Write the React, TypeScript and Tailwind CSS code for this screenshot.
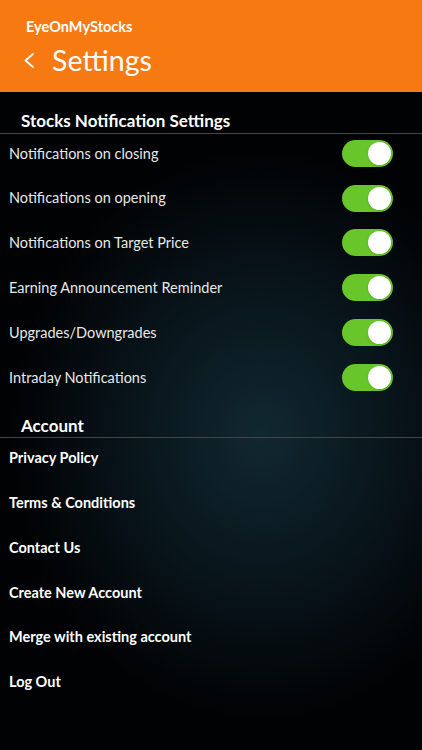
const notificationRows = [
  'Notifications on closing',
  'Notifications on opening',
  'Notifications on Target Price',
  'Earning Announcement Reminder',
  'Upgrades/Downgrades',
  'Intraday Notifications',
];

const accountRows = [
  'Privacy Policy',
  'Terms & Conditions',
  'Contact Us',
  'Create New Account',
  'Merge with existing account',
  'Log Out',
];

const Toggle = () => (
  <div className="w-[51px] h-[27px] rounded-full bg-[#68c52a] flex items-center justify-end pr-[2px]">
    <div className="w-[23px] h-[23px] rounded-full bg-white shadow" />
  </div>
);

const App = () => {
  return (
    <div
      className="w-[422px] h-[750px] overflow-hidden text-white bg-[radial-gradient(ellipse_70%_45%_at_62%_58%,#112831_0%,#071218_50%,#010203_85%)]"
      style={{ fontFamily: 'Lato, "Open Sans", sans-serif' }}
    >
      <header className="h-[92px] bg-[#f77912] pt-[17px] pl-[26px]">
        <div className="text-[14.5px] font-bold leading-[20px]">EyeOnMyStocks</div>
        <div className="flex items-center mt-[5px] -ml-[2px]">
          <svg width="10" height="15" viewBox="0 0 10 15" fill="none">
            <polyline
              points="9,1 1.5,7.5 9,14"
              stroke="white"
              strokeWidth="1.7"
              strokeLinecap="round"
              strokeLinejoin="round"
            />
          </svg>
          <span className="ml-[18px] text-[28.5px] leading-[36px]">Settings</span>
        </div>
      </header>

      <section className="pt-[18px]">
        <div className="pl-[21px] text-[17px] font-bold leading-[22px]">
          Stocks Notification Settings
        </div>
        <div className="mt-[1px] h-px bg-[#454545]" />
        <div className="flex flex-col -mt-[3px]">
          {notificationRows.map((label) => (
            <div key={label} className="h-[44.8px] flex items-center justify-between pl-[9px] pr-[29px]">
              <span className="text-[14.5px] text-[#e8e8e8]">{label}</span>
              <Toggle />
            </div>
          ))}
        </div>
      </section>

      <section className="pt-[15px]">
        <div className="pl-[21px] text-[17px] font-bold leading-[22px]">Account</div>
        <div className="h-px bg-[#454545]" />
        <div className="flex flex-col -mt-[2px]">
          {accountRows.map((label) => (
            <div key={label} className="h-[44.8px] flex items-center pl-[9px]">
              <span className="text-[14.5px] font-bold">{label}</span>
            </div>
          ))}
        </div>
      </section>
    </div>
  );
};

export default App;
